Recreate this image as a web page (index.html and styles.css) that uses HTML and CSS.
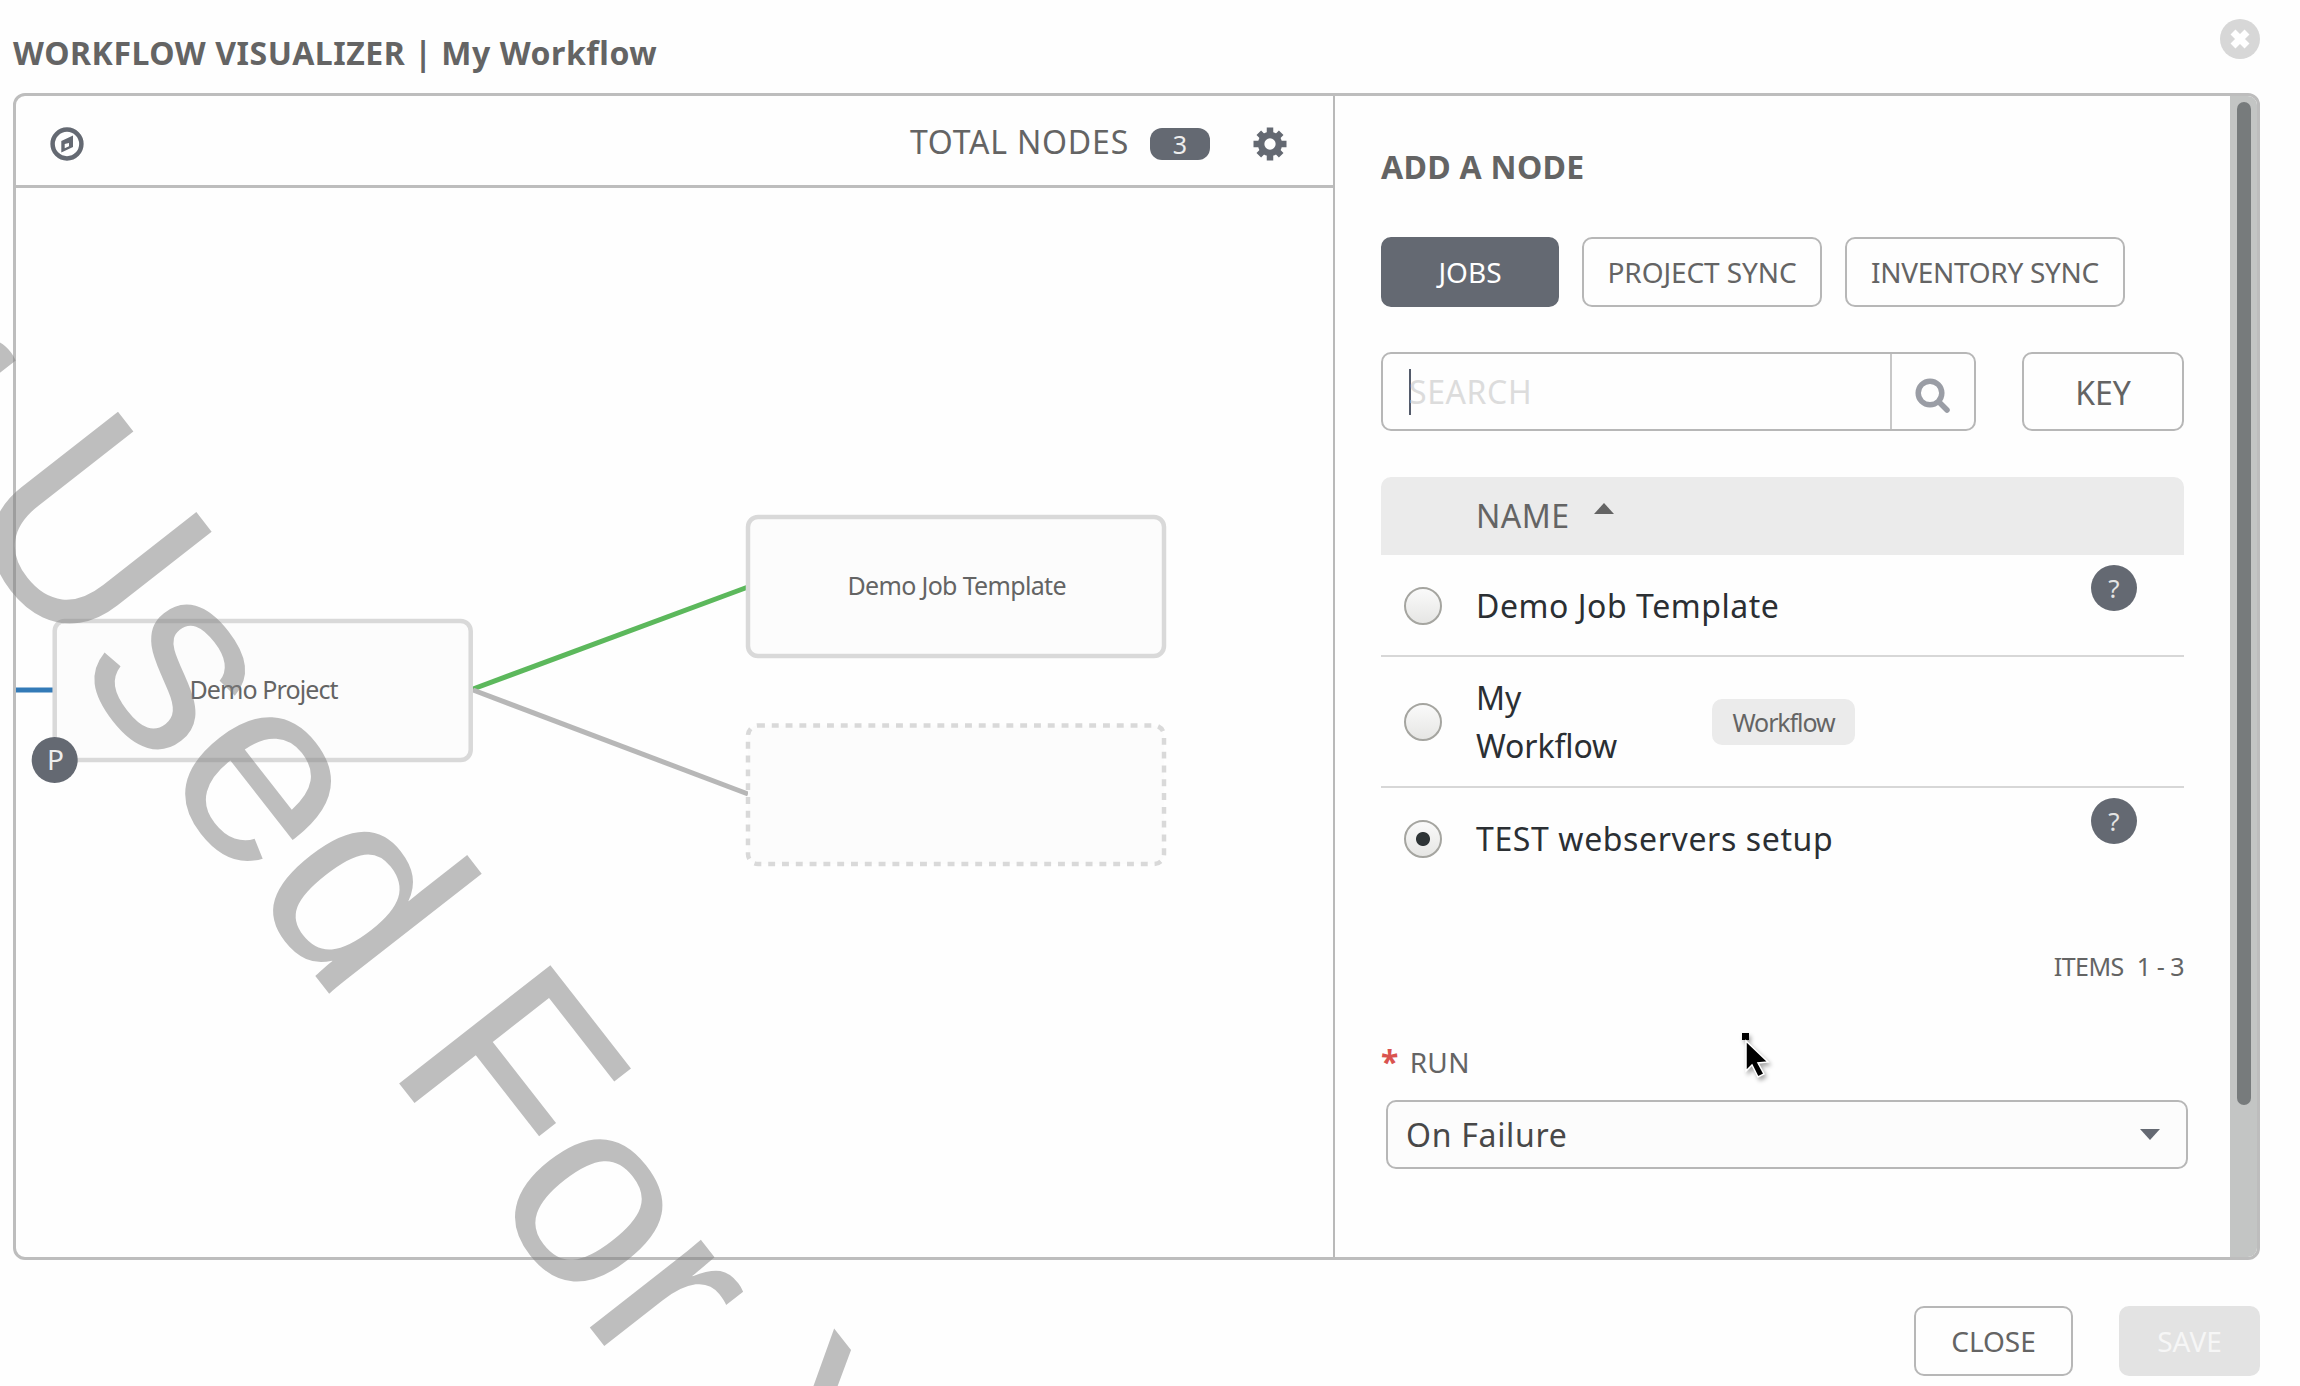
FILE: index.html
```html
<!DOCTYPE html>
<html lang="en">
<head>
<meta charset="utf-8">
<title>Workflow Visualizer</title>
<link rel="stylesheet" href="styles.css">
</head>
<body>
<div class="modal">
  <header class="modal-head">
    <h1 class="title">WORKFLOW VISUALIZER | My Workflow</h1>
    <svg class="dismiss" viewBox="0 0 40 40"><circle cx="20" cy="20" r="20"/><path d="M13 13L27 27M27 13L13 27"/></svg>
  </header>

  <main class="frame">
    <section class="graph">
      <div class="toolbar">
        <svg class="compass" viewBox="0 0 34 34"><circle cx="17" cy="17" r="14.4"/><path class="needle" fill-rule="evenodd" d="M23 8.500V20L11.300 25.500V14ZM19 16L14.700 17V21.200L19 19.200Z"/></svg>
        <div class="totals">
          <span class="totals-label">TOTAL NODES</span>
          <span class="count">3</span>
          <svg class="gear" viewBox="0 0 34 34"><circle cx="17" cy="17" r="8.900"/><path d="M17 .5V8M17 26V33.500M.5 17H8M26 17H33.500M5.800 5.800L10 10M24 24L28.200 28.200M28.200 5.800L24 10M10 24L5.800 28.200"/></svg>
        </div>
      </div>
      <svg class="canvas" viewBox="16 188 1317 1069">
        <path class="link always" d="M14 690H53"/>
        <path class="link success" d="M473 689L748 587"/>
        <path class="link pending" d="M473 690L748 794"/>
        <rect class="node" x="54.700" y="621" width="416" height="139" rx="10"/>
        <text class="node-name" x="264" y="698.500" textLength="149">Demo Project</text>
        <circle class="kind" cx="54.700" cy="760" r="23"/>
        <text class="kind-name" x="55.500" y="770">P</text>
        <rect class="node" x="748" y="517" width="416" height="139" rx="10"/>
        <text class="node-name" x="957" y="594.500" textLength="219">Demo Job Template</text>
        <rect class="node placeholder" x="748" y="725.500" width="416" height="138.500" rx="10"/>
      </svg>
    </section>

    <section class="panel">
      <h2 class="panel-title">ADD A NODE</h2>
      <div class="tabs">
        <span class="tab jobs">JOBS</span>
        <span class="tab project">PROJECT SYNC</span>
        <span class="tab inventory">INVENTORY SYNC</span>
      </div>
      <div class="search-row">
        <div class="search">
          <div class="field"><span class="caret"></span><span class="placeholder-text">SEARCH</span></div>
          <div class="search-btn"><svg viewBox="0 0 36 36"><circle cx="15" cy="15" r="11.800"/><path d="M24 24L32 32"/></svg></div>
        </div>
        <span class="key">KEY</span>
      </div>
      <div class="list">
        <div class="list-head"><span class="name-label">NAME</span><svg viewBox="0 0 20 11"><path d="M0 11L10 0L20 11Z"/></svg></div>
        <div class="row first"><i class="radio"></i><span class="name demo">Demo Job Template</span><b class="help">?</b></div>
        <div class="row second"><i class="radio"></i><span class="name">My<br>Workflow</span><span class="tag">Workflow</span></div>
        <div class="row third"><i class="radio on"></i><span class="name test">TEST webservers setup</span><b class="help">?</b></div>
      </div>
      <div class="items"><span>ITEMS</span><span>1 - 3</span></div>
      <div class="run-label"><span class="star">*</span><span>RUN</span></div>
      <div class="select"><span>On Failure</span><svg viewBox="0 0 20 11"><path d="M0 0H20L10 11Z"/></svg></div>
    </section>
    <div class="scrollbar"><div class="thumb"></div></div>
  </main>

  <footer class="actions">
    <span class="close">CLOSE</span>
    <span class="save">SAVE</span>
  </footer>
</div>

<svg class="watermark" viewBox="0 0 2300 1386">
  <g transform="rotate(52) translate(0 352.500)">
    <text x="209">r</text>
    <text class="cap" transform="translate(376.500 0) scale(.96 1)">U</text>
    <text x="571">sed</text>
    <text class="cap" transform="translate(1077.500 0) scale(.96 1)">F</text>
    <text x="1241.500">or</text>
    <text class="cap" transform="translate(1554.500 0) scale(.96 1)">Y</text>
  </g>
</svg>
<svg class="pointer" viewBox="0 0 36 50">
  <rect x="2" y="1" width="7" height="7"/>
  <path class="arrow" d="M6 9V39L12 33L18 45L24 42L18 31L28 30Z"/>
</svg>
</body>
</html>
```
FILE: styles.css
```css
* { box-sizing: border-box; }
body {
  margin: 0;
  background: #fefefe;
  color: #646464;
  font: 32px/44px "Noto Sans", "Open Sans", sans-serif;
}
svg { display: block; flex: none; }
h1, h2 { margin: 0; font-size: 32px; font-weight: 700; }

.modal { width: 2300px; height: 1386px; overflow: hidden; padding: 19px 40px 0 13px; }
.modal-head { display: flex; justify-content: space-between; align-items: flex-start; height: 74px; }
.title { padding-top: 12px; white-space: nowrap; letter-spacing: .55px; }
.dismiss { width: 40px; height: 40px; }
.dismiss circle { fill: #d7d7d7; }
.dismiss path { stroke: #fff; stroke-width: 7; }

.frame {
  display: flex;
  height: 1167px;
  border: 3px solid #bdbdbd;
  border-radius: 12px;
  overflow: hidden;
}
.graph { width: 1319px; border-right: 2px solid #b9b9b9; flex: none; }
.toolbar {
  display: flex;
  align-items: center;
  justify-content: space-between;
  height: 92px;
  padding: 6px 46px 0 34px;
  border-bottom: 3px solid #bdbdbd;
}
.compass { width: 34px; height: 34px; }
.compass circle { fill: none; stroke: #646972; stroke-width: 4.500; }
.needle { fill: #646972; }
.gear * { fill: none; stroke: #646972; stroke-width: 6.500; }
.totals { display: flex; align-items: center; }
.totals-label { margin-right: 21px; padding-bottom: 4px; letter-spacing: .8px; }
.count {
  width: 60px;
  height: 32px;
  border-radius: 12px;
  background: #646972;
  color: #eee;
  font-size: 25px;
  line-height: 32px;
  text-align: center;
}
.gear { width: 34px; height: 34px; margin-left: 43px; }
.canvas { width: 1317px; height: 1069px; }
.link { fill: none; stroke-width: 5; }
.always { stroke: #337ab7; }
.success { stroke: #5cb85c; }
.pending { stroke: #b7b7b7; }
.node { fill: #fcfcfc; stroke: #d9d9d9; stroke-width: 4.500; }
.placeholder { stroke-dasharray: 6.900 6.900; }
.node-name { font-size: 25px; fill: #646464; text-anchor: middle; }
.kind { fill: #646972; }
.kind-name { font-size: 28px; fill: #eee; text-anchor: middle; }

.panel { flex: 1; padding: 49px 45px 0 46px; }
.panel-title { height: 92px; letter-spacing: .3px; }
.tabs { display: flex; gap: 23px; height: 70px; margin-bottom: 45px; }
.tab, .key, .close, .save {
  display: flex;
  align-items: center;
  justify-content: center;
  border: 2.500px solid #b7b7b7;
  border-radius: 10px;
  font-size: 28px;
  white-space: nowrap;
}
.jobs { width: 178px; background: #646972; border-color: #646972; color: #fff; }
.project { width: 240px; letter-spacing: -.1px; }
.inventory { width: 280px; letter-spacing: -.3px; }
.search-row { display: flex; justify-content: space-between; height: 79px; width: 803px; margin-bottom: 46px; }
.search { display: flex; width: 595px; border: 2.500px solid #b7b7b7; border-radius: 10px; }
.field { display: flex; align-items: center; flex: 1; padding-left: 26px; }
.caret { width: 2px; height: 46px; background: #545b6b; }
.placeholder-text { margin-left: -2px; color: #dcdcdc; letter-spacing: .6px; }
.search-btn { display: flex; width: 84px; padding: 24px 0 0 23px; border-left: 2px solid #c8c8c8; }
.search-btn svg { width: 36px; height: 36px; }
.search-btn svg * { fill: none; stroke: #9a9da5; stroke-width: 5.500; stroke-linecap: round; }
.key { width: 162px; font-size: 32px; padding-top: 3px; }

.list { width: 803px; }
.list-head { display: flex; height: 78px; padding: 17px 0 0 95px; gap: 24px; background: #ebebeb; border-radius: 10px 10px 0 0; letter-spacing: .5px; }
.list-head svg { width: 20px; height: 11px; margin-top: 9px; fill: #646464; }
.row { display: flex; align-items: center; position: relative; padding-left: 23px; color: #2b2f33; border-bottom: 2.500px solid #d7d7d7; }
.first { height: 102px; padding-top: 1px; }
.second { height: 131px; }
.third { height: 102px; border: 0; }
.radio { flex: none; width: 38px; height: 38px; border: 2px solid #a5a5a0; border-radius: 50%; background: linear-gradient(#fafafa, #e6e6e4); }
.on { background: radial-gradient(circle, #2e3436 0 6.500px, transparent 7.500px), linear-gradient(#fafafa, #e6e6e4); }
.name { margin-left: 34px; line-height: 48px; width: 236px; white-space: nowrap; letter-spacing: -.1px; }
.demo { letter-spacing: .55px; }
.test { letter-spacing: .62px; }
.help {
  position: absolute;
  left: 710px;
  top: 10px;
  width: 46px;
  height: 46px;
  border-radius: 50%;
  background: #646972;
  color: #e4e4e4;
  font-weight: 400;
  font-size: 26px;
  line-height: 46px;
  text-align: center;
}
.tag { width: 143px; height: 46px; border-radius: 10px; background: #ebebeb; color: #646464; font-size: 25px; line-height: 46px; text-align: center; letter-spacing: -1.1px; }
.items { display: flex; justify-content: flex-end; gap: 13px; width: 803px; margin-top: 54px; font-size: 25px; letter-spacing: -.5px; }
.run-label { display: flex; gap: 11px; margin-top: 52px; font-size: 28px; letter-spacing: .3px; }
.star { color: #d9534f; font-weight: 700; font-size: 32px; }
.select {
  display: flex;
  align-items: center;
  justify-content: space-between;
  width: 802px;
  height: 69px;
  margin: 16px -5px 0 5px;
  padding: 0 26px 0 18px;
  border: 2.500px solid #b7b7b7;
  border-radius: 10px;
  background: #fcfcfc;
  color: #484848;
  letter-spacing: .7px;
}
.select svg { width: 20px; height: 11px; fill: #646972; }
.scrollbar { width: 27px; flex: none; padding: 6px 6px 0 7px; background: #c3c5c4; }
.thumb { height: 1003px; border-radius: 7px; background: #777b7c; }

.actions { display: flex; justify-content: flex-end; gap: 46px; padding-top: 46px; }
.close { width: 159px; height: 70px; }
.save { width: 141px; height: 70px; border-color: #e3e3e3; background: #e3e3e3; color: #f6f6f6; }

.watermark { position: absolute; left: 0; top: 0; width: 2300px; height: 1386px; opacity: .5; pointer-events: none; }
.watermark text { font: 268px "Liberation Sans", Arial, sans-serif; fill: #808080; }
.watermark .cap { font-size: 279px; }
.pointer { position: absolute; left: 1740px; top: 1032px; width: 36px; height: 50px; filter: drop-shadow(2px 3px 2px rgba(0,0,0,.35)); }
.arrow { stroke: #fff; stroke-width: 1.500; }
```
